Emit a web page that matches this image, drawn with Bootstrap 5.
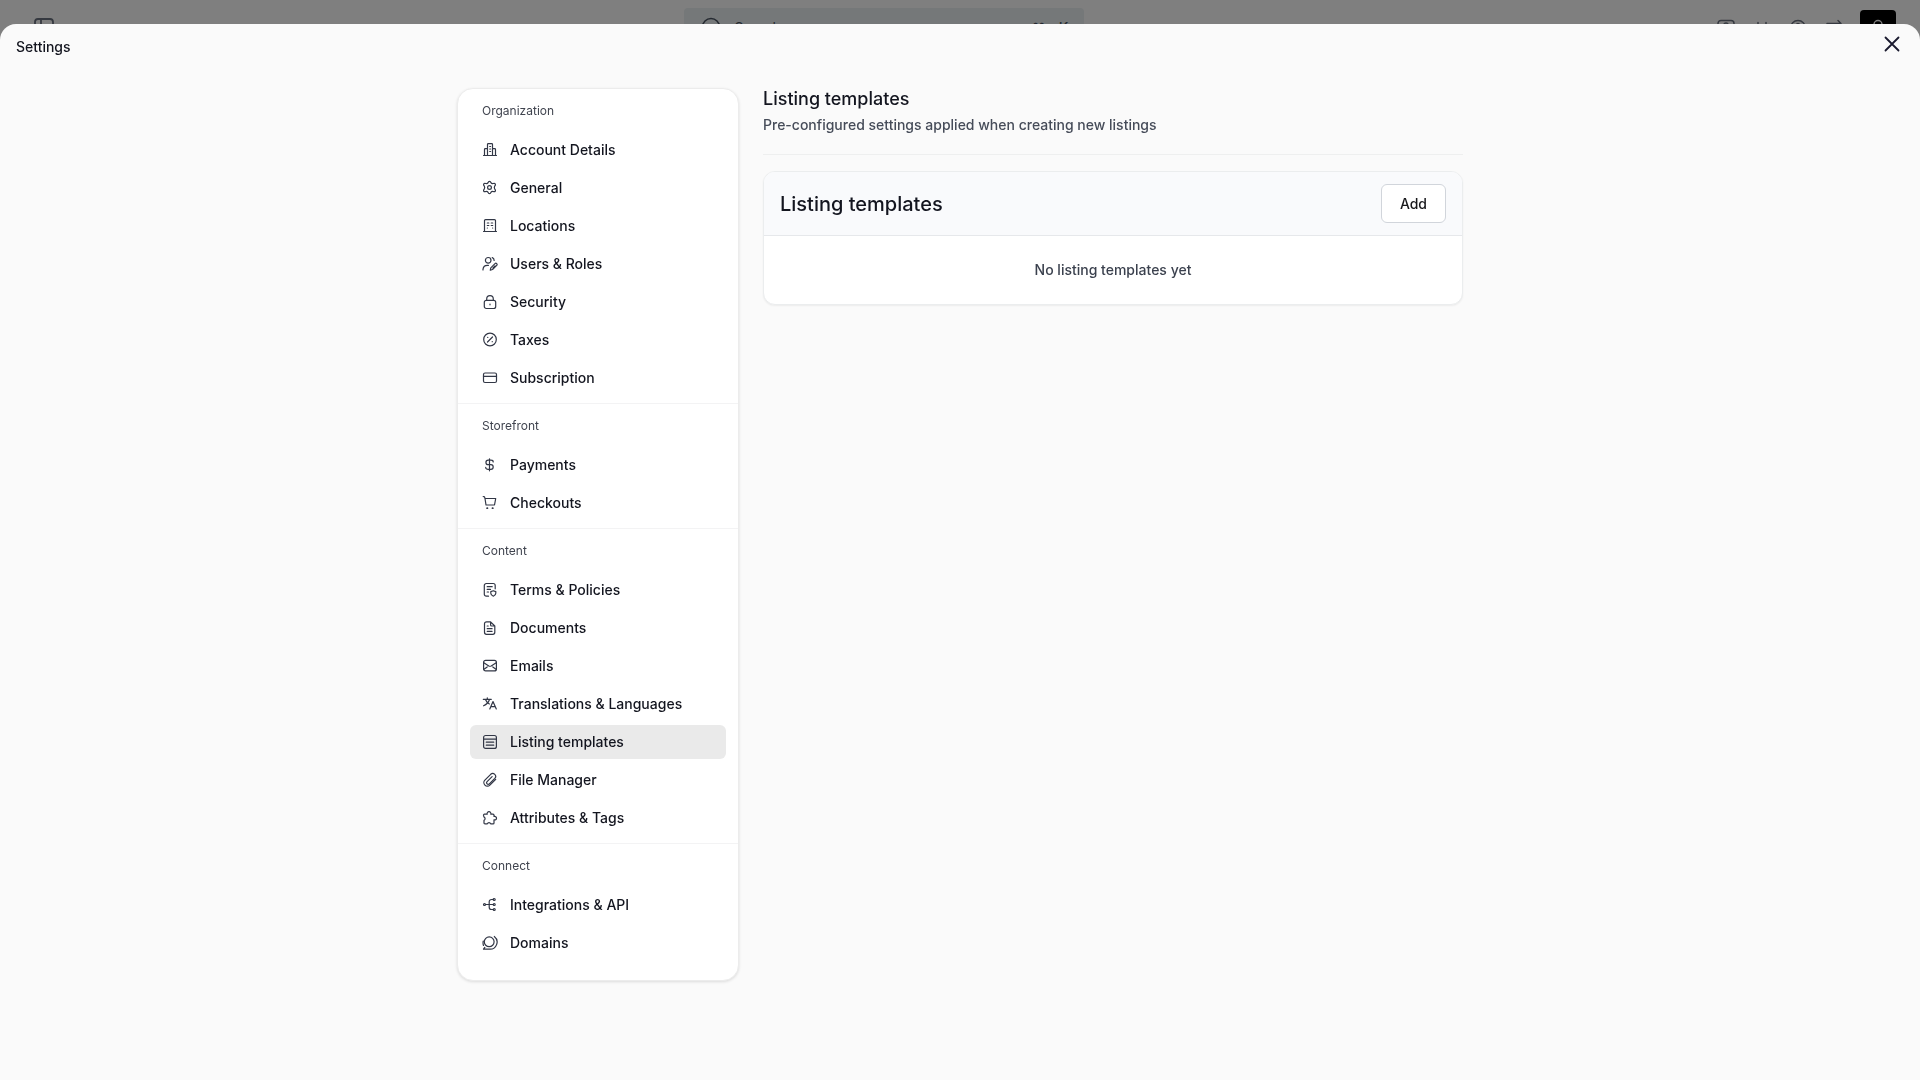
<!DOCTYPE html>
<html lang="en">
<head>
<meta charset="utf-8">
<meta name="viewport" content="width=device-width, initial-scale=1">
<title>Settings</title>
<link href="https://cdn.jsdelivr.net/npm/bootstrap@5.3.0/dist/css/bootstrap.min.css" rel="stylesheet">
<style>
  body { font-family: Inter, "Liberation Sans", sans-serif; font-size: 14px; line-height: 20px; font-weight: 500; color: #13151f; background: #fff; }
  svg { fill: none; stroke: currentColor; stroke-linecap: round; stroke-linejoin: round; flex-shrink: 0; }

  .app-bar { height: 56px; padding: 0 24px 0 32px; color: #4b5563; }
  .app-start { flex: 0 0 35%; }
  .app-bar .btn { color: #6b7280; }
  .search-box { width: 400px; height: 40px; padding: 0 16px; gap: 12px; background: #eaf0f2; border-radius: 4px; }
  .search-box input { font-size: 14px; font-weight: 400; color: #4b5563; }
  .search-box input::placeholder { color: #4b5563; opacity: 1; }
  .bar-icons { gap: 12px; }
  .bar-icons .btn { width: 24px; height: 24px; }
  .bar-icons .avatar-btn { width: 36px; height: 36px; margin-left: 2px; background: #000; color: #fff; border-radius: 4px; }

  .dimmer { background: rgba(0, 0, 0, .5); z-index: 10; }
  .sheet { top: 24px; z-index: 20; background: #fafafa; border-radius: 16px 16px 0 0; }
  .sheet-head { padding: 8px 16px; height: 46px; }
  .sheet-head h1 { font-size: 14px; line-height: 20px; font-weight: 500; padding-top: 5px; }
  .close-btn { width: 24px; height: 24px; color: #1a1a2e; }

  .settings-body { max-width: 1006px; gap: 24px; padding: 18px 0 32px; }
  .settings-nav { width: 282px; padding-bottom: 20px; background: #fff; border: 1px solid #ececec; border-radius: 16px; box-shadow: 0 1px 3px rgba(0, 0, 0, .12); }
  .nav-group { padding: 0 12px 8px; }
  .nav-group:last-child { padding-bottom: 0; }
  .nav-group + .nav-group { border-top: 1px solid #f3f3f4; }
  .nav-group h2 { font-size: 12px; line-height: 44px; font-weight: 400; color: #40444f; padding-left: 12px; }
  .nav-list { gap: 4px; }
  .nav-item-link { height: 34px; padding: 0 12px; gap: 12px; color: #13151f; border-radius: 6px; }
  .nav-item-link svg { color: #323746; stroke-width: 1.2; }
  .nav-item-link:hover { background: #f4f4f5; }
  .nav-item-link.current { background: #eaeaea; }

  .page-intro { padding: 1px 0 19px; border-bottom: 1px solid #eeefef; }
  .page-intro h2 { font-size: 18px; line-height: 20px; font-weight: 500; }
  .page-intro p { line-height: 20px; color: #464c59; padding-top: 6px; }
  .panel { margin-top: 16px; background: #fff; border: 1px solid #ebedee; border-radius: 12px; box-shadow: 0 1px 2px rgba(0, 0, 0, .06); }
  .panel-head { padding: 12px 16px; background: #f9fafc; border-bottom: 1px solid #e6e8eb; }
  .panel-head h3 { font-size: 20px; line-height: 28px; font-weight: 500; }
  .add-btn { padding: 8px 18px; line-height: 21px; font-size: 14px; font-weight: 500; background: #fff; border: 1px solid #d1d5db; border-radius: 6px; color: #18181b; }
  .panel-empty { padding: 24px; color: #3b414e; }
</style>
<script src="https://cdn.jsdelivr.net/npm/bootstrap@5.3.0/dist/js/bootstrap.bundle.min.js"></script>
</head>
<body class="vh-100 overflow-hidden">

<header class="app-bar d-flex align-items-center">
  <div class="app-start">
    <button class="btn p-0 border-0 d-flex" type="button" aria-label="Toggle sidebar">
      <svg width="24" height="24" viewBox="0 0 24 24" stroke-width="1.800"><rect x="3" y="3" width="18" height="18" rx="3"/><path d="M9 3v18"/></svg>
    </button>
  </div>
  <div class="search-box d-flex align-items-center">
    <svg width="22" height="22" viewBox="0 0 22 22" stroke-width="1.600"><circle cx="11" cy="10" r="8.500"/><path d="M17 16l4 4"/></svg>
    <input class="border-0 bg-transparent p-0 flex-grow-1" type="text" placeholder="Search" aria-label="Search">
    <span>⌘ +K</span>
  </div>
  <div class="bar-icons d-flex flex-grow-1 align-items-center justify-content-end">
    <button class="btn p-0 border-0 d-flex" type="button" aria-label="Store"><svg width="24" height="24" viewBox="0 0 24 24" stroke-width="1.500"><rect x="4" y="4.500" width="16" height="15" rx="3"/><circle cx="12" cy="9" r="2"/></svg></button>
    <button class="btn p-0 border-0 d-flex" type="button" aria-label="Notifications"><svg width="24" height="24" viewBox="0 0 24 24" stroke-width="1.500"><path d="M8 6.500v4M16 6.500v4M8 15q4 4 8 0"/></svg></button>
    <button class="btn p-0 border-0 d-flex" type="button" aria-label="Help"><svg width="24" height="24" viewBox="0 0 24 24" stroke-width="1.500"><circle cx="12" cy="12" r="7.500"/><path d="M10 9q2-3 4 0l-2 3.500"/></svg></button>
    <button class="btn p-0 border-0 d-flex" type="button" aria-label="Switch"><svg width="24" height="24" viewBox="0 0 24 24" stroke-width="1.500"><path d="M5 7.500h14M16 4.500l3 3-3 3M19 16H5m3-3-3 3 3 3"/></svg></button>
    <button class="btn p-0 border-0 avatar-btn d-flex align-items-center justify-content-center" type="button" aria-label="Account"><svg width="20" height="20" viewBox="0 0 20 20" stroke-width="1.400"><circle cx="10" cy="6.500" r="4"/><path d="M3 18q7-8 14 0"/></svg></button>
  </div>
</header>

<div class="dimmer position-fixed top-0 bottom-0 start-0 end-0"></div>

<div class="sheet position-fixed bottom-0 start-0 end-0 overflow-auto" role="dialog" aria-labelledby="sheetTitle">
  <div class="sheet-head d-flex justify-content-between align-items-start">
    <h1 id="sheetTitle" class="m-0">Settings</h1>
    <button class="close-btn btn p-0 border-0 d-flex" type="button" aria-label="Close">
      <svg width="24" height="24" viewBox="0 0 24 24" stroke-width="1.800"><path d="M5.500 5.500l13 13M18.500 5.500l-13 13"/></svg>
    </button>
  </div>

  <div class="settings-body d-flex align-items-start mx-auto">
    <nav class="settings-nav flex-shrink-0" aria-label="Settings">
      <section class="nav-group">
        <h2 class="m-0">Organization</h2>
        <div class="nav-list d-flex flex-column">
          <a href="#" class="nav-item-link d-flex align-items-center text-decoration-none"><svg width="16" height="16" viewBox="0 0 16 16"><path d="M1.500 13.500h13M5.500 13.500v-11a.8.8 0 0 1 .8-.8h3.400a.8.8 0 0 1 .8.800v11M2.500 13.500V7.500a.8.8 0 0 1 .8-.8h2.200M13.500 13.500V7.500a.8.8 0 0 0-.8-.8h-2.200M7.700 4.500h.9M7.700 7h.9M7.700 9.500h.9"/></svg><span>Account Details</span></a>
          <a href="#" class="nav-item-link d-flex align-items-center text-decoration-none"><svg width="16" height="16" viewBox="0 0 16 16"><path d="M6.100 2.700Q6.400 1.400 7.500 1.400T8.900 2.700Q9.700 3.900 11.200 3.500Q12.700 3 13.300 4T12.800 5.900Q11.800 7.500 12.800 9.100Q13.900 10.100 13.300 11.100T11.200 11.500Q9.700 11.200 8.900 12.400Q8.600 13.700 7.500 13.700T6.100 12.400Q5.300 11.200 3.800 11.500Q2.300 12.100 1.700 11.100T2.200 9.100Q3.200 7.500 2.200 5.900Q1.100 5 1.700 4T3.800 3.500Q5.300 3.900 6.100 2.700z"/><circle cx="7.500" cy="7.500" r="1.900"/></svg><span>General</span></a>
          <a href="#" class="nav-item-link d-flex align-items-center text-decoration-none"><svg width="16" height="16" viewBox="0 0 16 16"><path d="M1.500 13.500h13M2.500 13.500V2.600a1 1 0 0 1 1-1h9a1 1 0 0 1 1 1v10.900M5.300 5h1.500M5.300 7.500h1.500M9.200 5h1.500M9.200 7.500h1.500M5.300 10h.1M10.600 10h.1"/></svg><span>Locations</span></a>
          <a href="#" class="nav-item-link d-flex align-items-center text-decoration-none"><svg width="16" height="16" viewBox="0 0 16 16"><circle cx="6.200" cy="4.300" r="2.800"/><path d="M1 14v-.7a4.400 4.400 0 0 1 4.400-3.900h1M10.300 1.600q1.900.8 1.800 2.900M8.300 14.200l.5-2.400 4.200-4.200a1.200 1.200 0 0 1 1.700 1.700l-4.200 4.200zM11 12l2-2"/></svg><span>Users &amp; Roles</span></a>
          <a href="#" class="nav-item-link d-flex align-items-center text-decoration-none"><svg width="16" height="16" viewBox="0 0 16 16"><rect x="2.300" y="6.300" width="11.400" height="8.200" rx="2"/><path d="M4.700 6.300V5a3.300 3.300 0 0 1 6.600 0v1.300M8 10v.8"/></svg><span>Security</span></a>
          <a href="#" class="nav-item-link d-flex align-items-center text-decoration-none"><svg width="16" height="16" viewBox="0 0 16 16"><circle cx="8" cy="7.500" r="6.300"/><path d="M5.500 10l5-5M5.700 5.400h.1M10.200 9.700h.1"/></svg><span>Taxes</span></a>
          <a href="#" class="nav-item-link d-flex align-items-center text-decoration-none"><svg width="16" height="16" viewBox="0 0 16 16"><rect x="1.500" y="3" width="13" height="9.500" rx="1.500"/><path d="M1.500 6.300h13"/></svg><span>Subscription</span></a>
        </div>
      </section>
      <section class="nav-group">
        <h2 class="m-0">Storefront</h2>
        <div class="nav-list d-flex flex-column">
          <a href="#" class="nav-item-link d-flex align-items-center text-decoration-none"><svg width="16" height="16" viewBox="0 0 16 16"><path d="M7.500 1.800v12M11.200 5c0-1.100-1-1.800-2.300-1.800H6.200a2.200 2.200 0 0 0 0 4.500h2.700a2.300 2.300 0 0 1 0 4.600H6.200c-1.500 0-2.500-.8-2.500-1.900"/></svg><span>Payments</span></a>
          <a href="#" class="nav-item-link d-flex align-items-center text-decoration-none"><svg width="16" height="16" viewBox="0 0 16 16"><path d="M1.200 1.500l1.300.4.5 1.600 1 6.500h8.500l1.200-6.500H3"/><path d="M5.100 13.200h.3M10.500 13.200h.3" stroke-width="1.800"/></svg><span>Checkouts</span></a>
        </div>
      </section>
      <section class="nav-group">
        <h2 class="m-0">Content</h2>
        <div class="nav-list d-flex flex-column">
          <a href="#" class="nav-item-link d-flex align-items-center text-decoration-none"><svg width="16" height="16" viewBox="0 0 16 16"><path d="M6.500 14.200H4.300a2 2 0 0 1-2-2V3.500a2 2 0 0 1 2-2h6.900a2 2 0 0 1 2 2v3.300M5.200 4.700h5M5.200 7.400h3.300M5.200 10h1.300M11.300 8.700l2.500.9v1.700q0 1.900-2.500 2.900-2.500-1-2.500-2.900V9.600z"/></svg><span>Terms &amp; Policies</span></a>
          <a href="#" class="nav-item-link d-flex align-items-center text-decoration-none"><svg width="16" height="16" viewBox="0 0 16 16"><path d="M8.600 1.800H4.500a2 2 0 0 0-2 2v8.500a2 2 0 0 0 2 2h6.300a2 2 0 0 0 2-2V6zM8.600 1.800V5a1 1 0 0 0 1 1h3.200M5.200 6h1M5.200 8.700h4.900M5.200 11.300h4.900"/></svg><span>Documents</span></a>
          <a href="#" class="nav-item-link d-flex align-items-center text-decoration-none"><svg width="16" height="16" viewBox="0 0 16 16"><rect x="1.600" y="2.400" width="12.800" height="10.500" rx="2"/><path d="M1.800 4.700l5 3.200q1.200.7 2.400 0l5-3.200M2 11.200l3.200-2.300M14 11.200l-3.200-2.300"/></svg><span>Emails</span></a>
          <a href="#" class="nav-item-link d-flex align-items-center text-decoration-none"><svg width="16" height="16" viewBox="0 0 16 16"><path d="M1.300 3.300h8M5.300 1.800v1.500M7.600 3.300Q6 8 1.600 9.800M3.300 3.300Q4.600 6.700 7.400 8M7.800 13l3.200-7.500 3.300 7.500M8.800 10.600h4.500"/></svg><span>Translations &amp; Languages</span></a>
          <a href="#" class="nav-item-link current d-flex align-items-center text-decoration-none" aria-current="page"><svg width="16" height="16" viewBox="0 0 16 16"><rect x="1.600" y="1.500" width="12.800" height="12.900" rx="2"/><path d="M1.600 5.200h12.800M4.300 8.200h7.400M4.300 11.200h7.400"/></svg><span>Listing templates</span></a>
          <a href="#" class="nav-item-link d-flex align-items-center text-decoration-none"><svg width="16" height="16" viewBox="0 0 16 16" stroke-width="1.100"><path d="M13.700 7.300l-5.800 5.800a3.500 3.500 0 0 1-5-5l5.800-5.800a2.900 2.900 0 0 1 4.100 4.100L7.300 11.900a1.500 1.500 0 0 1-2.200-2.200l5-5"/></svg><span>File Manager</span></a>
          <a href="#" class="nav-item-link d-flex align-items-center text-decoration-none"><svg width="16" height="16" viewBox="0 0 16 16"><path d="M2.500 4.200h2.700a1.900 1.900 0 1 1 3.600 0h2.200a1 1 0 0 1 1 1v1.300a1.800 1.800 0 1 1 0 3.300v3.100a1 1 0 0 1-1 1H8.700a1.800 1.800 0 0 0-3.400 0H3a1 1 0 0 1-1-1V10.300a1.800 1.800 0 0 0 0-3.300L1.500 5.400a1 1 0 0 1 1-1.200z"/></svg><span>Attributes &amp; Tags</span></a>
        </div>
      </section>
      <section class="nav-group">
        <h2 class="m-0">Connect</h2>
        <div class="nav-list d-flex flex-column">
          <a href="#" class="nav-item-link d-flex align-items-center text-decoration-none"><svg width="16" height="16" viewBox="0 0 16 16"><circle cx="2.500" cy="7.500" r="1"/><circle cx="12.200" cy="2.500" r="1"/><circle cx="12.200" cy="7.500" r="1"/><circle cx="12.200" cy="12.500" r="1"/><path d="M3.500 7.500h7.700M11.200 2.500H9.500A2.300 2.300 0 0 0 7.200 4.800v5.400a2.300 2.300 0 0 0 2.300 2.300h1.700"/></svg><span>Integrations &amp; API</span></a>
          <a href="#" class="nav-item-link d-flex align-items-center text-decoration-none"><svg width="16" height="16" viewBox="0 0 16 16"><circle cx="7.200" cy="6.800" r="4.900"/><path d="M12.300 1.500a7.100 7.100 0 0 1-4.800 12.700H1.500l1.300-1.800M1.500 10.500q-.8-2.200-.2-4.500"/></svg><span>Domains</span></a>
        </div>
      </section>
    </nav>

    <main class="flex-grow-1">
      <div class="page-intro">
        <h2 class="m-0">Listing templates</h2>
        <p class="m-0">Pre-configured settings applied when creating new listings</p>
      </div>
      <section class="panel overflow-hidden">
        <div class="panel-head d-flex justify-content-between align-items-center">
          <h3 class="m-0">Listing templates</h3>
          <button class="add-btn btn" type="button">Add</button>
        </div>
        <div class="panel-empty text-center">No listing templates yet</div>
      </section>
    </main>
  </div>
</div>
</body>
</html>
